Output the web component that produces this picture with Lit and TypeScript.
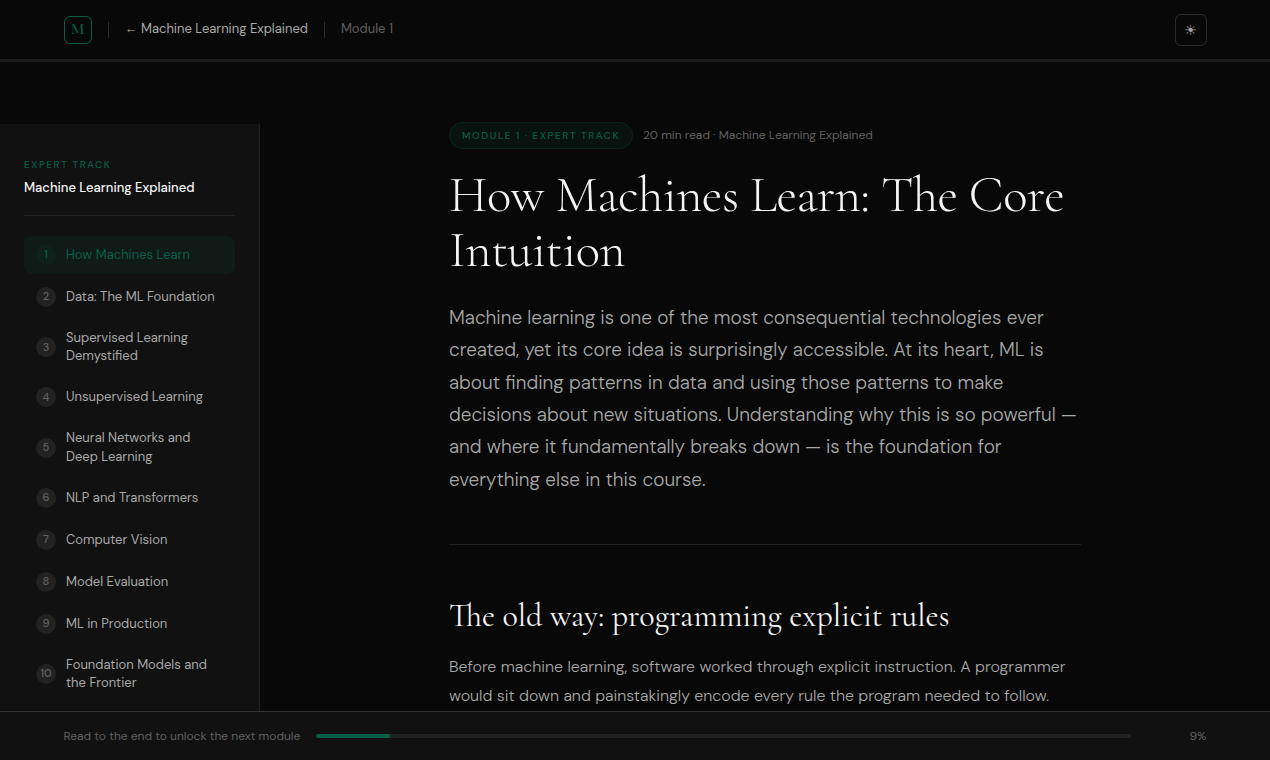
import { LitElement, html, css } from "lit";
import { classMap } from "lit/directives/class-map.js";
import { styleMap } from "lit/directives/style-map.js";

const MODULES = [
  "How Machines Learn",
  "Data: The ML Foundation",
  "Supervised Learning Demystified",
  "Unsupervised Learning",
  "Neural Networks and Deep Learning",
  "NLP and Transformers",
  "Computer Vision",
  "Model Evaluation",
  "ML in Production",
  "Foundation Models and the Frontier",
];

class AppRoot extends LitElement {
  static properties = { active: { state: true }, progress: { type: Number } };
  declare active: number;
  declare progress: number;

  constructor() {
    super();
    this.active = 0;
    this.progress = 9;
  }

  static styles = css`
    :host {
      display: flex;
      flex-direction: column;
      height: 100vh;
      overflow: hidden;
      background: #080808;
      color: #f5f5f5;
      font-family: "DM Sans", Lato, sans-serif;
      font-size: 16px;
      font-weight: 300;
      line-height: 1.7;
    }
    * { box-sizing: border-box; }
    h1, h2, p, ol { margin: 0; padding: 0; }
    .top {
      flex: none;
      display: flex;
      align-items: center;
      justify-content: space-between;
      height: 62px;
      padding: 0 5vw;
      border-bottom: 3px solid #1c1c1c;
    }
    .crumbs { display: flex; align-items: center; gap: 16px; font-size: 13px; }
    .logo {
      display: grid;
      place-items: center;
      width: 28px;
      height: 28px;
      padding-bottom: 2px;
      border: 1px solid #065f46;
      border-radius: 6px;
      color: #065f46;
      font-family: "Cormorant Garamond", "Liberation Serif", serif;
      font-size: 16px;
      font-weight: 600;
      line-height: 1;
    }
    .sep { width: 1px; height: 16px; background: #2a2a2a; }
    .back { color: #a8a8a8; font-weight: 400; }
    .arrow { font-family: "Liberation Sans", sans-serif; line-height: 1; }
    .here { color: #606060; font-weight: 400; }
    .theme {
      display: grid;
      place-items: center;
      width: 32px;
      height: 32px;
      padding: 0;
      border: 1px solid #2a2a2a;
      border-radius: 6px;
      background: none;
      color: #a8a8a8;
      font: 400 14px "DejaVu Sans", sans-serif;
    }
    .body { flex: 1; min-height: 0; display: flex; }
    aside {
      flex: none;
      width: 260px;
      margin-top: 62px;
      padding: 32px 24px;
      background: #111;
      border-right: 1px solid #222;
    }
    .track { margin-bottom: 4px; color: #065f46; font-size: 10px; font-weight: 500; letter-spacing: 0.15em; }
    .course {
      padding-bottom: 16px;
      margin-bottom: 20px;
      border-bottom: 1px solid #222;
      font-size: 13px;
      font-weight: 500;
    }
    ol { list-style: none; display: flex; flex-direction: column; gap: 4px; }
    li {
      display: flex;
      align-items: center;
      gap: 10px;
      padding: 9px 12px;
      border-radius: 8px;
      color: #a8a8a8;
      font-size: 13px;
      font-weight: 400;
      line-height: 1.4;
    }
    .num {
      flex: none;
      display: grid;
      place-items: center;
      width: 20px;
      height: 20px;
      border-radius: 50%;
      background: #222;
      color: #606060;
      font-size: 11px;
      font-weight: 500;
    }
    .on { background: #101a17; color: #065f46; }
    .on .num { background: #0f211b; color: #065f46; }
    main { flex: 1; overflow: hidden; }
    article { max-width: 760px; margin: 0 auto; padding: 60px 64px; }
    .meta { display: flex; align-items: center; gap: 10px; margin-bottom: 19.4px; font-size: 12px; color: #606060; font-weight: 400; }
    .badge {
      padding: 4px 12px;
      border: 1px solid #08251c;
      border-radius: 20px;
      background: #08120f;
      color: #065f46;
      font-size: 10px;
      font-weight: 500;
      letter-spacing: 0.15em;
    }
    h1, h2 { font-family: "Cormorant Garamond", "Liberation Serif", serif; }
    h1 { margin-bottom: 24px; font-size: 4vw; font-weight: 300; line-height: 1.08; letter-spacing: -0.01em; }
    .lead { padding-bottom: 48px; margin-bottom: 52px; border-bottom: 1px solid #222; color: #a8a8a8; font-size: 19px; }
    h2 { margin-bottom: 18px; font-size: 32px; font-weight: 400; line-height: 1.2; }
    .text { color: #a8a8a8; line-height: 1.8; }
    .bottom {
      flex: none;
      display: flex;
      align-items: center;
      gap: 16px;
      height: 49px;
      padding: 0 5vw;
      border-top: 1px solid #333;
      background: #111;
      color: #606060;
      font-size: 12px;
      font-weight: 400;
    }
    .rail { flex: 1; height: 4px; border-radius: 2px; background: #222; overflow: hidden; }
    .fill { height: 100%; border-radius: 2px; background: #065f46; }
    .pct { width: 60px; text-align: right; }
  `;

  render() {
    return html`
      <header class="top">
        <nav class="crumbs">
          <span class="logo">M</span><span class="sep"></span>
          <span class="back"><span class="arrow">←</span> Machine Learning Explained</span><span class="sep"></span>
          <span class="here">Module 1</span>
        </nav>
        <button class="theme">☀</button>
      </header>
      <div class="body">
        <aside>
          <div class="track">EXPERT TRACK</div>
          <div class="course">Machine Learning Explained</div>
          <ol>
            ${MODULES.map((name, i) => html`
              <li class=${classMap({ on: i === this.active })} @click=${() => (this.active = i)}>
                <span class="num">${i + 1}</span><span>${name}</span>
              </li>`)}
          </ol>
        </aside>
        <main>
          <article>
            <div class="meta">
              <span class="badge">MODULE 1 · EXPERT TRACK</span>
              <span>20 min read · Machine Learning Explained</span>
            </div>
            <h1>How Machines Learn: The Core Intuition</h1>
            <p class="lead">Machine learning is one of the most consequential technologies ever created, yet its core idea is surprisingly accessible. At its heart, ML is about finding patterns in data and using those patterns to make decisions about new situations. Understanding why this is so powerful — and where it fundamentally breaks down — is the foundation for everything else in this course.</p>
            <h2>The old way: programming explicit rules</h2>
            <p class="text">Before machine learning, software worked through explicit instruction. A programmer would sit down and painstakingly encode every rule the program needed to follow.</p>
          </article>
        </main>
      </div>
      <footer class="bottom">
        <span>Read to the end to unlock the next module</span>
        <div class="rail"><div class="fill" style=${styleMap({ width: `${this.progress}%` })}></div></div>
        <span class="pct">${this.progress}%</span>
      </footer>`;
  }
}
customElements.define("app-root", AppRoot);
